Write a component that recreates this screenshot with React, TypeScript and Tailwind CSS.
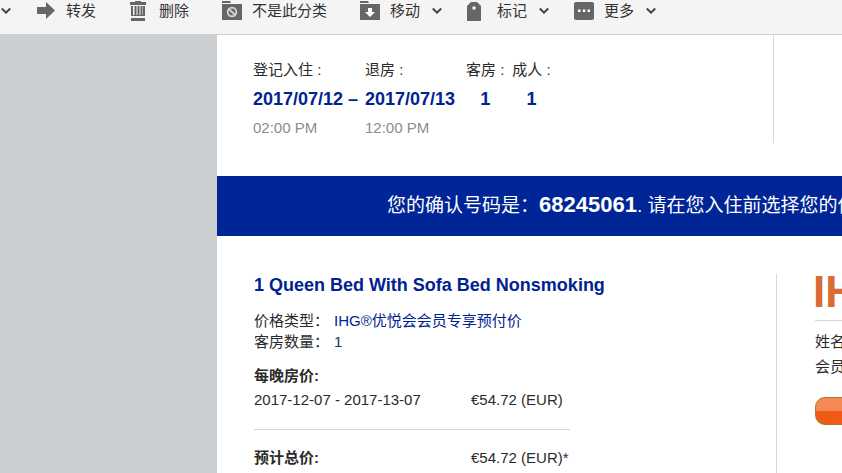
import React from 'react';

interface ToolbarItem {
    id: string;
    label: string;
    icon: React.ReactNode;
    hasMenu?: boolean;
}

const ForwardIcon = () => (
    <svg width="20" height="20" viewBox="0 0 20 20" fill="#666" aria-hidden="true">
        <path d="M1 6h9V1l9 8.5-9 8.5v-5H1z" />
    </svg>
);

const TrashIcon = () => (
    <svg width="20" height="20" viewBox="0 0 20 20" fill="#666" aria-hidden="true">
        <path d="M6 0h6v1h5v3H1V1h5z" />
        <path d="M2 5h2v10H2zM5.500 5h2v10h-2zM8.500 5h2v10h-2zM11.500 5h2v10h-2zM14 5h2v10h-2z" />
        <path d="M2 14h14v1H2zM2 17h14v3H2z" />
    </svg>
);

const SpamIcon = () => (
    <svg width="20" height="20" viewBox="0 0 20 20" aria-hidden="true">
        <path d="M0 0h8l1 2H0zM0 3h20v16H0z" fill="#666" />
        <g fill="none" stroke="#d4d4d4" strokeWidth="1.8">
            <circle cx="10" cy="11" r="4.3" />
            <path d="M7 8l6 6" />
        </g>
    </svg>
);

const MoveIcon = () => (
    <svg width="20" height="20" viewBox="0 0 20 20" aria-hidden="true">
        <path d="M0 0h8l1 2H0zM0 3h20v16H0z" fill="#666" />
        <path d="M8 7h4v4h3l-5 5-5-5h3z" fill="#fff" />
    </svg>
);

const TagIcon = () => (
    <svg width="20" height="20" viewBox="0 0 20 20" aria-hidden="true">
        <path d="M4 1h6l4 4v14q0 2-2 2H2q-2 0-2-2V5z" fill="#666" />
        <circle cx="7" cy="7" r="1.8" fill="#f4f4f4" />
    </svg>
);

const MoreIcon = () => (
    <svg width="20" height="20" viewBox="0 0 20 20" aria-hidden="true">
        <rect x="0" y="1" width="20" height="18" rx="2" fill="#666" />
        <path d="M4 8.500h2.500V11H4zM8.800 8.500h2.500V11H8.800zM13.500 8.500H16V11h-2.500z" fill="#fff" />
    </svg>
);

const Chevron = () => (
    <svg width="10" height="8" viewBox="0 0 10 8" fill="none" stroke="#444" strokeWidth="2" aria-hidden="true">
        <path d="M0.800 1.500L5 5.700L9.200 1.500" />
    </svg>
);

const TOOLBAR: ToolbarItem[] = [
    { id: 'forward', label: '转发', icon: <ForwardIcon /> },
    { id: 'delete', label: '删除', icon: <TrashIcon /> },
    { id: 'spam', label: '不是此分类', icon: <SpamIcon /> },
    { id: 'move', label: '移动', icon: <MoveIcon />, hasMenu: true },
    { id: 'tag', label: '标记', icon: <TagIcon />, hasMenu: true },
    { id: 'more', label: '更多', icon: <MoreIcon />, hasMenu: true },
];

const Toolbar = () => (
    <header className="flex shrink-0 items-center border-b border-[#d0d0d0] bg-[#f4f4f4] pb-3 pl-px text-[#333]">
        <button type="button" aria-label="展开" className="mr-[25px] shrink-0">
            <Chevron />
        </button>
        {TOOLBAR.map(item => (
            <button
                key={item.id}
                type="button"
                className={`flex h-[22px] shrink-0 items-center gap-[10px] ${item.hasMenu ? 'mr-[25px]' : 'mr-[33px]'}`}
            >
                {item.icon}
                <span>{item.label}</span>
                {item.hasMenu && <span className="ml-[2px]"><Chevron /></span>}
            </button>
        ))}
    </header>
);

const StaySummary = () => (
    <section className="flex pb-[33px]">
        <div className="w-[557px] shrink-0 border-r border-[#d8d8d8] pt-5 pb-px pl-9">
            <table className="text-left leading-[29px]">
                <thead>
                    <tr>
                        <th className="w-28 p-0 font-normal">登记入住 :</th>
                        <th className="w-[101px] p-0 font-normal">退房 :</th>
                        <th className="p-0 pr-2 font-normal">客房 :</th>
                        <th className="p-0 font-normal">成人 :</th>
                    </tr>
                </thead>
                <tbody>
                    <tr className="text-lg leading-[30px] font-bold text-[#00238f]">
                        <td className="p-0">2017/07/12 –</td>
                        <td className="p-0">2017/07/13</td>
                        <td className="p-0 pr-2 text-center">1</td>
                        <td className="p-0 text-center">1</td>
                    </tr>
                    <tr className="leading-7 text-[#8c8c8c]">
                        <td className="p-0">02:00 PM</td>
                        <td className="p-0">12:00 PM</td>
                        <td className="p-0" />
                        <td className="p-0" />
                    </tr>
                </tbody>
            </table>
        </div>
    </section>
);

const ConfirmationBanner = () => (
    <section className="h-[60px] overflow-hidden bg-[#002596] pl-[170px] text-[19px] leading-[60px] whitespace-nowrap text-white">
        您的确认号码是：<strong className="text-[22px] leading-none font-bold">68245061</strong>. 请在您入住前选择您的偏好
    </section>
);

const RateDetails = () => (
    <div className="w-[560px] shrink-0 border-r border-[#d8d8d8] pb-10 pl-[37px]">
        <h2 className="text-lg leading-[22px] font-bold text-[#00238f]">1 Queen Bed With Sofa Bed Nonsmoking</h2>
        <dl className="mt-[14px] grid grid-cols-[80px_1fr] leading-[21px]">
            <dt>价格类型：</dt>
            <dd className="text-[#00238f]">IHG®优悦会会员专享预付价</dd>
            <dt>客房数量：</dt>
            <dd className="text-[#1c2f6b]">1</dd>
        </dl>
        <dl className="mt-3 grid w-[316px] grid-cols-[217px_1fr] leading-6">
            <dt className="col-span-2 font-bold">每晚房价:</dt>
            <dd>2017-12-07 - 2017-13-07</dd>
            <dd>€54.72 (EUR)</dd>
        </dl>
        <dl className="mt-[17px] grid w-[316px] grid-cols-[217px_1fr] border-t border-[#d8d8d8] pt-4 leading-6">
            <dt className="font-bold">预计总价:</dt>
            <dd>€54.72 (EUR)*</dd>
        </dl>
    </div>
);

const MemberPanel = () => (
    <aside className="min-w-0 flex-1 overflow-hidden pl-[38px] whitespace-nowrap">
        <div className="-ml-[2px] h-[46px] text-[44px] leading-9 font-bold text-[#d96b34]">IHG</div>
        <div className="border-t border-[#d8d8d8] pt-2 leading-[25px]">
            <p>姓名</p>
            <p>会员</p>
        </div>
        <button
            type="button"
            aria-label="会员"
            className="mt-[18px] h-7 w-36 rounded-[10px] border border-[#a8762f] bg-linear-to-b from-[#f58a55] from-50% to-[#f05a14] to-50%"
        />
    </aside>
);

export default function App() {
    return (
        <div className="flex h-screen flex-col overflow-hidden bg-white font-['Liberation_Sans','Noto_Sans_CJK_SC',sans-serif] text-[15px] text-[#2b2b2b]">
            <Toolbar />
            <div className="flex min-h-0 flex-1">
                <div className="w-[217px] shrink-0 bg-[#cbcfd2]" />
                <main className="min-w-0 flex-1 overflow-hidden">
                    <StaySummary />
                    <ConfirmationBanner />
                    <section className="flex pt-[38px]">
                        <RateDetails />
                        <MemberPanel />
                    </section>
                </main>
            </div>
        </div>
    );
}
